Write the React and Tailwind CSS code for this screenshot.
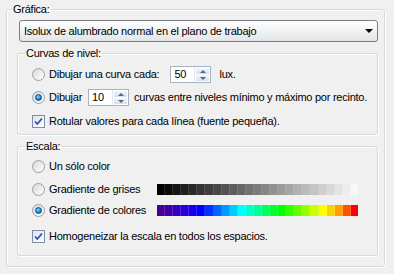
import React from "react";

// 25 steps for each scale bar
const colorStops = [
  [0, [72, 0, 144]],
  [3, [40, 0, 220]],
  [5, [0, 0, 255]],
  [10, [0, 255, 255]],
  [15, [0, 255, 0]],
  [20, [255, 255, 0]],
  [22, [255, 160, 0]],
  [24, [255, 0, 0]],
];

const colorAt = (i) => {
  for (let s = 0; s < colorStops.length - 1; s++) {
    const [a, ca] = colorStops[s];
    const [b, cb] = colorStops[s + 1];
    if (i >= a && i <= b) {
      const t = (i - a) / (b - a);
      const c = ca.map((v, k) => Math.round(v + (cb[k] - v) * t));
      return `rgb(${c[0]},${c[1]},${c[2]})`;
    }
  }
  return "rgb(255,0,0)";
};

const grayAt = (i) => {
  const v = Math.round((i / 24) * 248);
  return `rgb(${v},${v},${v})`;
};

const steps = Array.from({ length: 25 }, (_, i) => i);

const ScaleBar = ({ pick }) => (
  <div className="flex h-[11px] w-[201px]">
    {steps.map((i) => (
      <div
        key={i}
        className="h-full flex-1 border-r border-white/15 last:border-r-0"
        style={{ backgroundColor: pick(i) }}
      />
    ))}
  </div>
);

const Radio = ({ checked }) => (
  <span className="relative flex h-[13px] w-[13px] shrink-0 items-center justify-center rounded-full border border-[#9a9ea3] bg-gradient-to-br from-[#d6d8da] to-white">
    {checked && (
      <span className="h-[7px] w-[7px] rounded-full border border-[#0b4f8c] bg-[radial-gradient(circle_at_40%_35%,#8fd6ff_0%,#1f86d6_55%,#0a4a86_100%)]" />
    )}
  </span>
);

const Check = () => (
  <span className="flex h-[13px] w-[13px] shrink-0 items-center justify-center border border-[#7d8fa8] bg-gradient-to-br from-[#dfe3e8] to-white">
    <svg width="9" height="9" viewBox="0 0 9 9">
      <path d="M1 4.5 L3.3 7 L8 1.5" fill="none" stroke="#2a4dbf" strokeWidth="1.8" />
    </svg>
  </span>
);

const Spinner = ({ value, className }) => (
  <div className={`flex h-[17px] w-[41px] shrink-0 border border-[#a5b3c2] bg-white ${className}`}>
    <span className="flex-1 pl-[3px] leading-[15px]">{value}</span>
    <div className="flex w-[16px] flex-col gap-px border-l border-[#e4e9ee] p-px">
      <div className="flex flex-1 items-center justify-center rounded-[1px] bg-gradient-to-b from-[#f4f7fb] to-[#d6dee8]">
        <span className="h-0 w-0 border-x-[3px] border-b-[3px] border-x-transparent border-b-[#4e6a98]" />
      </div>
      <div className="flex flex-1 items-center justify-center rounded-[1px] bg-gradient-to-b from-[#f4f7fb] to-[#d6dee8]">
        <span className="h-0 w-0 border-x-[3px] border-t-[3px] border-x-transparent border-t-[#4e6a98]" />
      </div>
    </div>
  </div>
);

const Group = ({ title, className, children }) => (
  <fieldset
    className={`rounded-[3px] border border-[#d3dbe1] px-[7px] shadow-[inset_1px_1px_0_#ffffff,1px_1px_0_#ffffff] ${className}`}
  >
    <legend className="px-[1px] leading-[13px]">{title}</legend>
    {children}
  </fieldset>
);

export default function App() {
  return (
    <div className="h-[274px] w-[394px] overflow-hidden whitespace-nowrap bg-[#f0f0f0] pl-[6px] pt-[3px] font-['Liberation_Sans',Arial,sans-serif] text-[11px] leading-[13px] tracking-[-0.25px] text-black">
      <fieldset className="flex h-[264px] w-[379px] flex-col rounded-[3px] border border-[#d3dbe1] px-[5px] shadow-[inset_1px_1px_0_#ffffff,1px_1px_0_#ffffff]">
        <legend className="px-[1px] leading-[13px]">Gráfica:</legend>

        <div className="ml-[7px] mt-[4px] flex h-[22px] w-[359px] items-center justify-between rounded-[3px] border border-[#7a7f85] bg-gradient-to-b from-white to-[#e3e5e8] pl-[4px] pr-[4px]">
          <span>Isolux de alumbrado normal en el plano de trabajo</span>
          <span className="h-0 w-0 border-x-[4px] border-t-[4px] border-x-transparent border-t-black" />
        </div>

        <Group title="Curvas de nivel:" className="ml-[5px] mt-[5px] h-[88px] w-[361px]">
          <div className="flex flex-col pl-[7px] pt-[6px]">
            <div className="flex h-[17px] items-center">
              <Radio />
              <span className="ml-[4px]">Dibujar una curva cada:</span>
              <Spinner value="50" className="ml-[11px]" />
              <span className="ml-[8px]">lux.</span>
            </div>
            <div className="mt-[6px] flex h-[17px] items-center">
              <Radio checked />
              <span className="ml-[4px]">Dibujar</span>
              <Spinner value="10" className="ml-[6px]" />
              <span className="ml-[5px]">curvas entre niveles mínimo y máximo por recinto.</span>
            </div>
            <div className="mt-[7px] flex h-[17px] items-center">
              <Check />
              <span className="ml-[4px]">Rotular valores para cada línea (fuente pequeña).</span>
            </div>
          </div>
        </Group>

        <Group title="Escala:" className="ml-[5px] mt-[5px] h-[116px] w-[361px]">
          <div className="flex flex-col pl-[7px] pt-[5px]">
            <div className="flex h-[17px] items-center">
              <Radio />
              <span className="ml-[4px]">Un sólo color</span>
            </div>
            <div className="mt-[6px] flex h-[17px] items-center">
              <Radio />
              <span className="ml-[4px] w-[108px]">Gradiente de grises</span>
              <ScaleBar pick={grayAt} />
            </div>
            <div className="mt-[4px] flex h-[17px] items-center">
              <Radio checked />
              <span className="ml-[4px] w-[108px]">Gradiente de colores</span>
              <ScaleBar pick={colorAt} />
            </div>
            <div className="mt-[9px] flex h-[17px] items-center">
              <Check />
              <span className="ml-[4px]">Homogeneizar la escala en todos los espacios.</span>
            </div>
          </div>
        </Group>
      </fieldset>
    </div>
  );
}
